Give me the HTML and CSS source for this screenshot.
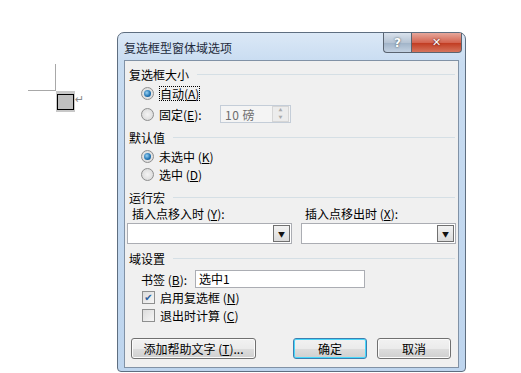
FILE: index.html
```html
<!DOCTYPE html>
<html lang="zh">
    <head>
        <title>复选框型窗体域选项</title>
        <meta charset="UTF-8">
        <link rel="stylesheet" href="styles.css">
    </head>
    <body>
        <div class="doc">
            <span class="crop-v"></span>
            <span class="crop-h"></span>
            <span class="field"><span></span></span>
            <span class="para">↵</span>
        </div>

        <div class="dialog">
            <div class="titlebar">
                <span class="title">复选框型窗体域选项</span>
                <div class="caption-btns">
                    <span class="cbtn help">?</span>
                    <span class="cbtn close">✕</span>
                </div>
            </div>

            <div class="client">
                <div class="group"><span>复选框大小</span></div>
                <div class="row r1 indent">
                    <span class="radio on"></span>
                    <span class="focus">自动(<u>A</u>)</span>
                </div>
                <div class="row r2 indent">
                    <span class="radio"></span>
                    <span class="lbl-fixed">固定(<u>E</u>):</span>
                    <div class="spin">
                        <span class="spin-val">10 磅</span>
                        <span class="spin-btns"><i>▲</i><i>▼</i></span>
                    </div>
                </div>

                <div class="group g2"><span>默认值</span></div>
                <div class="row r3 indent">
                    <span class="radio on"></span>
                    <span>未选中 (<u>K</u>)</span>
                </div>
                <div class="row r4 indent">
                    <span class="radio"></span>
                    <span>选中 (<u>D</u>)</span>
                </div>

                <div class="group g3"><span>运行宏</span></div>
                <div class="row macro-labels">
                    <span class="macro-in">插入点移入时 (<u>Y</u>):</span>
                    <span>插入点移出时 (<u>X</u>):</span>
                </div>
                <div class="row combos">
                    <div class="combo first"><span class="drop">▼</span></div>
                    <div class="combo second"><span class="drop">▼</span></div>
                </div>

                <div class="group g4"><span>域设置</span></div>
                <div class="row bookmark">
                    <span>书签 (<u>B</u>):</span>
                    <div class="textbox">选中1</div>
                </div>
                <div class="row r5 cb-row">
                    <span class="check on">✔</span>
                    <span>启用复选框 (<u>N</u>)</span>
                </div>
                <div class="row r6 cb-row">
                    <span class="check"></span>
                    <span>退出时计算 (<u>C</u>)</span>
                </div>

                <div class="buttons">
                    <button class="btn wide">添加帮助文字 (<u>T</u>)...</button>
                    <div class="ok-cancel">
                        <button class="btn default">确定</button>
                        <button class="btn">取消</button>
                    </div>
                </div>
            </div>
        </div>
    </body>
</html>
```

FILE: styles.css
```css
body {
    margin: 0;
    width: 521px;
    height: 373px;
    background-color: #fff;
    font-family: "Noto Sans CJK SC", "DejaVu Sans", sans-serif;
    font-size: 12px;
    color: #000;
    position: relative;
    overflow: hidden;
}

u {
    text-decoration: underline;
    text-underline-offset: 1px;
}

/* document marks on the page behind the dialog */
.doc span {
    position: absolute;
}

.crop-v {
    left: 55px;
    top: 64px;
    width: 1px;
    height: 27px;
    background-color: #a8a8a8;
}

.crop-h {
    left: 28px;
    top: 90px;
    width: 27px;
    height: 1px;
    background-color: #a8a8a8;
}

.field {
    left: 56px;
    top: 91px;
    width: 19px;
    height: 21px;
    background-color: #c8c8c8;
}
    .field span {
        left: 1px;
        top: 3px;
        width: 15px;
        height: 14px;
        border: 1px solid #000;
        background-color: #c0c0c0;
    }

.para {
    left: 75px;
    top: 93px;
    font-size: 11px;
    color: #888;
    font-family: "DejaVu Sans", sans-serif;
}

/* dialog window */
.dialog {
    position: absolute;
    left: 117px;
    top: 32px;
    width: 335px;
    height: 335px;
    border: 1px solid #5e6e80;
    border-radius: 7px 7px 4px 4px;
    background: linear-gradient(to bottom, #dbe8f6 0, #c8dcf1 30px, #bed5ee 100%);
    padding: 0 6px 3px 6px;
    display: flex;
    flex-direction: column;
}

.titlebar {
    height: 27px;
    display: flex;
    align-items: flex-start;
    justify-content: space-between;
    flex-shrink: 0;
}

.title {
    margin-top: 6px;
    color: #1e2b3c;
}

.caption-btns {
    display: flex;
    margin-right: -3px;
}

.cbtn {
    height: 19px;
    border: 1px solid #5a6470;
    border-top: none;
    display: flex;
    align-items: center;
    justify-content: center;
    font-family: "DejaVu Sans", sans-serif;
    font-weight: bold;
    color: #fff;
}

.help {
    width: 27px;
    border-radius: 0 0 0 4px;
    border-right: none;
    background: linear-gradient(to bottom, #d9e2ec 0, #b6c4d4 50%, #9fb2c7 51%, #c3d2e2 100%);
    font-size: 12px;
    text-shadow: 0 0 2px #344;
}

.close {
    width: 49px;
    border-radius: 0 0 4px 0;
    background: linear-gradient(to bottom, #e6a79b 0, #d46450 50%, #c0391f 51%, #d6745c 100%);
    font-size: 11px;
    text-shadow: 0 0 2px #400;
}

.client {
    flex: 1;
    background-color: #f0f0f0;
    border: 1px solid #8192a6;
    padding: 5px 0 0 4px;
    display: flex;
    flex-direction: column;
}

.group {
    height: 16px;
    display: flex;
    align-items: center;
    gap: 8px;
    margin-right: 3px;
}
    .group::after {
        content: "";
        flex: 1;
        height: 1px;
        background-color: #d5dfe5;
    }

.g2 { margin-top: 5px; }
.g3 { margin-top: 5px; }
.g4 { margin-top: 6px; }

.row {
    display: flex;
    align-items: center;
}

.indent {
    padding-left: 12px;
    gap: 5px;
}

.r1 { height: 18px; margin-top: 2px; }
.r2 { height: 20px; margin-top: 2px; }
.r3 { height: 18px; margin-top: 2px; }
.r4 { height: 19px; }

.radio {
    width: 11px;
    height: 11px;
    border-radius: 50%;
    border: 1px solid #8e8f8f;
    background: radial-gradient(circle, #f4f4f4 0, #d4d4d4 100%);
    position: relative;
}
    .radio.on::after {
        content: "";
        position: absolute;
        left: 2px;
        top: 2px;
        width: 7px;
        height: 7px;
        border-radius: 50%;
        background: radial-gradient(circle at 40% 40%, #9ad3f5 0, #1c6fae 60%, #0d4c86 100%);
    }

.focus {
    outline: 1px dotted #000;
    outline-offset: -1px;
    padding: 0 1px;
    line-height: 15px;
}

.lbl-fixed {
    width: 56px;
}

.spin {
    width: 69px;
    height: 16px;
    border: 1px solid #c4cdd8;
    background-color: #f4f4f4;
    display: flex;
    align-items: center;
    justify-content: space-between;
}

.spin-val {
    color: #6d6d6d;
    padding-left: 4px;
    letter-spacing: 0.5px;
}

.spin-btns {
    width: 15px;
    height: 14px;
    margin-right: 1px;
    display: flex;
    flex-direction: column;
    border: 1px solid #d6d6d6;
    background-color: #ececec;
}
    .spin-btns i {
        flex: 1;
        font-style: normal;
        font-size: 4px;
        color: #aaa;
        text-align: center;
        line-height: 6px;
    }

.macro-labels {
    height: 16px;
    margin-top: 0;
    padding-left: 3px;
}

.macro-in {
    width: 173px;
    flex-shrink: 0;
}

.combos {
    margin-top: 2px;
    gap: 9px;
}

.combo {
    height: 19px;
    border: 1px solid #abadb3;
    background-color: #fff;
    display: flex;
    justify-content: flex-end;
    align-items: center;
}
    .combo.first { width: 163px; margin-left: -2px; }
    .combo.second { width: 153px; }

.drop {
    width: 15px;
    height: 15px;
    margin-right: 1px;
    border: 1px solid #707070;
    background: linear-gradient(to bottom, #f2f2f2, #dcdcdc);
    font-size: 7px;
    display: flex;
    align-items: center;
    justify-content: center;
    color: #111;
}

.bookmark {
    height: 18px;
    margin-top: 4px;
    padding-left: 12px;
    gap: 8px;
}

.textbox {
    width: 165px;
    height: 16px;
    border: 1px solid #abadb3;
    background-color: #fff;
    padding-left: 3px;
    line-height: 16px;
}

.cb-row {
    height: 18px;
    padding-left: 13px;
    gap: 5px;
}

.check {
    width: 11px;
    height: 11px;
    border: 1px solid #8e8f8f;
    background: linear-gradient(135deg, #dcdcdc, #f6f6f6);
    font-size: 10px;
    line-height: 11px;
    text-align: center;
    color: #2a5f9e;
    font-family: "DejaVu Sans", sans-serif;
}

.buttons {
    margin-top: 14px;
    padding: 0 7px 0 2px;
    display: flex;
    justify-content: space-between;
}

.ok-cancel {
    display: flex;
    gap: 10px;
}

.btn {
    height: 21px;
    width: 74px;
    padding: 0;
    font-family: inherit;
    font-size: 12px;
    color: #000;
    border: 1px solid #707070;
    border-radius: 3px;
    background: linear-gradient(to bottom, #f2f2f2 0, #ebebeb 50%, #dddddd 51%, #cfcfcf 100%);
    box-shadow: inset 0 0 0 1px #fbfbfb;
}

.btn.wide {
    width: 125px;
}

.btn.default {
    border-color: #3c7fb1;
    box-shadow: inset 0 0 0 1px #48d8fb;
}
```
